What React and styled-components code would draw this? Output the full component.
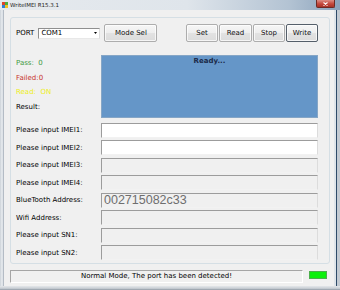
import React from 'react';
import styled, { createGlobalStyle } from 'styled-components';

const Global = createGlobalStyle`
  html, body { margin: 0; padding: 0; background: #fff; }
  body { width: 340px; height: 290px; overflow: hidden; font-family: "DejaVu Sans", sans-serif; }
`;

const Window = styled.div`
  width: 340px;
  height: 290px;
  display: flex;
  flex-direction: column;
  background: #d3dbe4;
  overflow: hidden;
`;

const TitleBar = styled.div`
  height: 10px;
  flex: none;
  display: flex;
  align-items: flex-start;
  padding-left: 2px;
  background: linear-gradient(to right, #e6eaee 0%, #dfe5eb 55%, #b3c3d3 85%, #8aa2bb 100%);
`;

const AppIcon = styled.svg`
  flex: none;
  margin-top: 2px;
`;

const Title = styled.span`
  margin-left: 2px;
  margin-top: 2px;
  font-size: 5.5px;
  line-height: 6px;
  color: #222;
  white-space: nowrap;
`;

const CloseButton = styled.div`
  margin-left: auto;
  margin-right: 5px;
  width: 17px;
  height: 7px;
  border-radius: 0 0 2px 2px;
  background: linear-gradient(#dd8d84, #c4473b 55%, #a83227);
  border: 1px solid #6e2a24;
  border-top: none;
  display: flex;
  align-items: center;
  justify-content: center;
`;

const Middle = styled.div`
  flex: 1;
  display: flex;
  min-height: 0;
`;

const LeftFrame = styled.div`
  width: 4px;
  flex: none;
  background: linear-gradient(to right, #c2c9d0 0, #e3e7eb 1px, #dde2e7 3px, #b4bcc5 3px);
`;

const RightFrame = styled.div`
  width: 6px;
  flex: none;
  background: linear-gradient(to right, #dfe4e9 0, #dfe4e9 2px, #2e4a68 2px, #2e4a68 3px, #c3cad2 3px);
`;

const BottomFrame = styled.div`
  height: 4px;
  flex: none;
  background: linear-gradient(#e4e7ea, #c7cdd3 60%, #8e98a3);
`;

const Client = styled.div`
  flex: 1;
  background: #f0f0f0;
  display: flex;
  flex-direction: column;
  padding: 7px 4px 3px 6px;
  font-size: 7px;
  color: #000;
`;

const GroupBox = styled.div`
  border: 1px solid #d5dfe5;
  border-radius: 3px;
  padding: 6px 11px 3px 5px;
`;

const TopRow = styled.div`
  display: flex;
  align-items: center;
  height: 18px;
`;

const PortLabel = styled.span`
  margin-right: 4px;
  white-space: nowrap;
`;

const Select = styled.div`
  width: 62px;
  height: 11px;
  box-sizing: border-box;
  background: #fff;
  border: 1px solid;
  border-color: #8f8f8f #dcdcdc #e8e8e8 #8f8f8f;
  display: flex;
  align-items: center;
  padding-left: 2px;
  line-height: 9px;
`;

const SelectArrow = styled.svg`
  margin-left: auto;
  margin-right: 2px;
`;

const Button = styled.button`
  box-sizing: border-box;
  width: ${p => p.$w}px;
  height: 18px;
  margin-left: ${p => p.$ml || 0}px;
  padding: 0;
  font-family: "DejaVu Sans", sans-serif;
  font-size: 7px;
  color: #111;
  border: 1px solid ${p => (p.$default ? '#555f6a' : '#adadad')};
  border-radius: 2px;
  background: linear-gradient(#f6f6f6, #eeeeee 50%, #e2e2e2 51%, #dcdcdc);
  box-shadow: inset 0 0 0 1px rgba(255, 255, 255, 0.7);
`;

const ButtonGroup = styled.div`
  margin-left: auto;
  display: flex;
  gap: 1px;
`;

const MainGrid = styled.div`
  margin-top: 13px;
  display: grid;
  grid-template-columns: 85px 1fr;
  row-gap: 2.5px;
`;

const Counters = styled.div`
  display: flex;
  flex-direction: column;
  padding-top: 1px;
  line-height: 14.5px;
  margin-bottom: 2px;
`;

const Counter = styled.span`
  color: ${p => p.$color};
  white-space: nowrap;
`;

const StatusPanel = styled.div`
  height: 63px;
  box-sizing: border-box;
  background: #6596c8;
  border: 1px solid #86a6c6;
  margin-bottom: 2px;
  text-align: center;
  font-weight: bold;
  color: #1b2a48;
  line-height: 9px;
  padding-top: 1px;
`;

const FieldLabel = styled.label`
  display: flex;
  align-items: center;
  height: 15px;
  white-space: nowrap;
`;

const Field = styled.input`
  display: block;
  width: 100%;
  height: 15px;
  box-sizing: border-box;
  margin: 0;
  padding: 0 0 0 2px;
  border: 1px solid;
  border-color: #9c9c9c #dcdcdc #f2f2f2 #9c9c9c;
  background: ${p => (p.$enabled ? '#ffffff' : '#f0f0f0')};
  font-family: "Liberation Sans", Arial, sans-serif;
  font-size: 12.5px;
  line-height: 13px;
  color: #6e6e6e;
  -webkit-text-fill-color: #6e6e6e;
  outline: none;
`;

const StatusRow = styled.div`
  margin-top: 6px;
  display: flex;
  height: 13px;
`;

const StatusBox = styled.div`
  width: 293px;
  height: 13px;
  box-sizing: border-box;
  border: 1px solid;
  border-color: #a5a5a5 #ffffff #ffffff #a5a5a5;
  text-align: center;
  line-height: 11px;
  white-space: nowrap;
`;

const Indicator = styled.div`
  margin-left: 6px;
  margin-top: 1px;
  width: 18px;
  height: 8px;
  box-sizing: border-box;
  background: #0cf00c;
  border: 1px solid #4caf4c;
`;

const fields = [
  { label: 'Please input IMEI1:', enabled: true },
  { label: 'Please input IMEI2:', enabled: true },
  { label: 'Please input IMEI3:' },
  { label: 'Please input IMEI4:' },
  { label: 'BlueTooth Address:', value: '002715082c33' },
  { label: 'Wifi Address:' },
  { label: 'Please input SN1:' },
  { label: 'Please input SN2:' },
];

export default function App() {
  return (
    <>
      <Global />
      <Window>
        <TitleBar>
          <AppIcon width="6" height="6" viewBox="0 0 6 6">
            <rect x="0" y="0" width="3" height="3" fill="#e0452b" />
            <rect x="3" y="0" width="3" height="3" fill="#4caf3c" />
            <rect x="0" y="3" width="3" height="3" fill="#2f7fd6" />
            <rect x="3" y="3" width="3" height="3" fill="#f4c321" />
          </AppIcon>
          <Title>WriteIMEI R15.3.1</Title>
          <CloseButton>
            <svg width="5" height="4" viewBox="0 0 5 4">
              <path d="M0.5 0.5 L4.5 3.5 M4.5 0.5 L0.5 3.5" stroke="#fff" strokeWidth="1.1" />
            </svg>
          </CloseButton>
        </TitleBar>
        <Middle>
          <LeftFrame />
          <Client>
            <GroupBox>
              <TopRow>
                <PortLabel>PORT</PortLabel>
                <Select>
                  COM1
                  <SelectArrow width="3" height="2" viewBox="0 0 3 2">
                    <path d="M0 0 L3 0 L1.5 2 Z" fill="#000" />
                  </SelectArrow>
                </Select>
                <Button $w={53} $ml={4}>Mode Sel</Button>
                <ButtonGroup>
                  <Button $w={32}>Set</Button>
                  <Button $w={33}>Read</Button>
                  <Button $w={32}>Stop</Button>
                  <Button $w={32} $default>Write</Button>
                </ButtonGroup>
              </TopRow>
              <MainGrid>
                <Counters>
                  <Counter $color="#3f9a3f">Pass:&nbsp; 0</Counter>
                  <Counter $color="#c8342c">Failed:0</Counter>
                  <Counter $color="#eeee20">Read:&nbsp; ON</Counter>
                  <Counter $color="#000">Result:</Counter>
                </Counters>
                <StatusPanel>Ready...</StatusPanel>
                {fields.map(f => (
                  <React.Fragment key={f.label}>
                    <FieldLabel>{f.label}</FieldLabel>
                    <Field $enabled={f.enabled} readOnly value={f.value || ''} />
                  </React.Fragment>
                ))}
              </MainGrid>
            </GroupBox>
            <StatusRow>
              <StatusBox>Normal Mode, The port has been detected!</StatusBox>
              <Indicator />
            </StatusRow>
          </Client>
          <RightFrame />
        </Middle>
        <BottomFrame />
      </Window>
    </>
  );
}
